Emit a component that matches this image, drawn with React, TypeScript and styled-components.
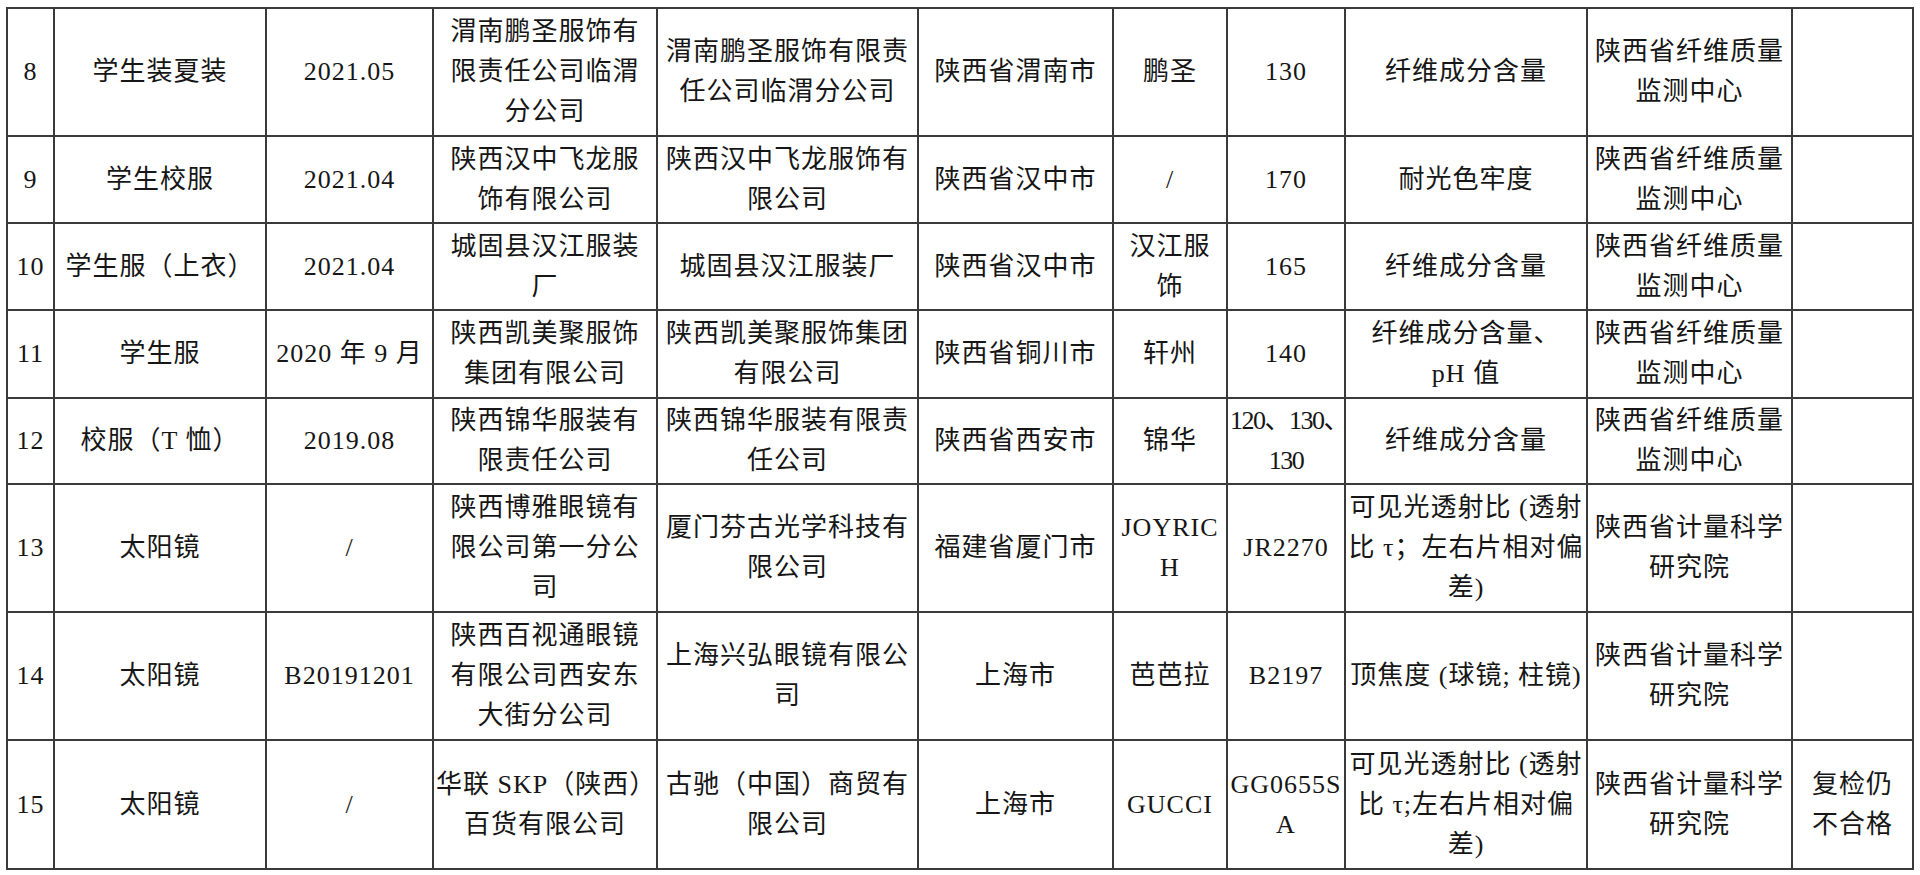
import React from 'react'
import styled, { createGlobalStyle } from 'styled-components'

const GlobalStyle = createGlobalStyle`
  html, body {
    margin: 0;
    padding: 0;
    background: #fff;
  }
`

const Page = styled.div`
  padding: 7px 0 0 6px;
  width: 1920px;
  height: 875px;
  box-sizing: border-box;
  overflow: hidden;
`

const Table = styled.table`
  border-collapse: collapse;
  table-layout: fixed;
  width: 1906px;
  font-family: "Liberation Serif", "Noto Sans CJK SC", serif;
  font-size: 26px;
  color: #161616;
`

const Row = styled.tr<{ $h: number }>`
  height: ${(p) => p.$h}px;
`

const Cell = styled.td<{ $tight?: boolean }>`
  border: 2px solid #3a3a3a;
  padding: 0 2px;
  text-align: center;
  vertical-align: middle;
  white-space: pre;
  line-height: 40px;
  letter-spacing: ${(p) => (p.$tight ? '-1.5px' : '1px')};
`

const colWidths = [47, 212, 167, 224, 261, 195, 114, 118, 242, 205, 121]

// a cell that starts with "~" is set tighter (text that fills the whole column)
type RowData = { h: number; cells: string[] }

const rows: RowData[] = [
  {
    h: 128,
    cells: [
      '8',
      '学生装夏装',
      '2021.05',
      '渭南鹏圣服饰有\n限责任公司临渭\n分公司',
      '渭南鹏圣服饰有限责\n任公司临渭分公司',
      '陕西省渭南市',
      '鹏圣',
      '130',
      '纤维成分含量',
      '陕西省纤维质量\n监测中心',
      '',
    ],
  },
  {
    h: 87,
    cells: [
      '9',
      '学生校服',
      '2021.04',
      '陕西汉中飞龙服\n饰有限公司',
      '陕西汉中飞龙服饰有\n限公司',
      '陕西省汉中市',
      '/',
      '170',
      '耐光色牢度',
      '陕西省纤维质量\n监测中心',
      '',
    ],
  },
  {
    h: 87,
    cells: [
      '10',
      '学生服（上衣）',
      '2021.04',
      '城固县汉江服装\n厂',
      '城固县汉江服装厂',
      '陕西省汉中市',
      '汉江服\n饰',
      '165',
      '纤维成分含量',
      '陕西省纤维质量\n监测中心',
      '',
    ],
  },
  {
    h: 88,
    cells: [
      '11',
      '学生服',
      '2020 年 9 月',
      '陕西凯美聚服饰\n集团有限公司',
      '陕西凯美聚服饰集团\n有限公司',
      '陕西省铜川市',
      '轩州',
      '140',
      '纤维成分含量、\npH 值',
      '陕西省纤维质量\n监测中心',
      '',
    ],
  },
  {
    h: 86,
    cells: [
      '12',
      '校服（T 恤）',
      '2019.08',
      '陕西锦华服装有\n限责任公司',
      '陕西锦华服装有限责\n任公司',
      '陕西省西安市',
      '锦华',
      '~120、130、\n130',
      '纤维成分含量',
      '陕西省纤维质量\n监测中心',
      '',
    ],
  },
  {
    h: 128,
    cells: [
      '13',
      '太阳镜',
      '/',
      '陕西博雅眼镜有\n限公司第一分公\n司',
      '厦门芬古光学科技有\n限公司',
      '福建省厦门市',
      'JOYRIC\nH',
      'JR2270',
      '可见光透射比 (透射\n比 τ；左右片相对偏\n差)',
      '陕西省计量科学\n研究院',
      '',
    ],
  },
  {
    h: 128,
    cells: [
      '14',
      '太阳镜',
      'B20191201',
      '陕西百视通眼镜\n有限公司西安东\n大街分公司',
      '上海兴弘眼镜有限公\n司',
      '上海市',
      '芭芭拉',
      'B2197',
      '顶焦度 (球镜; 柱镜)',
      '陕西省计量科学\n研究院',
      '',
    ],
  },
  {
    h: 129,
    cells: [
      '15',
      '太阳镜',
      '/',
      '华联 SKP（陕西）\n百货有限公司',
      '古驰（中国）商贸有\n限公司',
      '上海市',
      'GUCCI',
      'GG0655S\nA',
      '可见光透射比 (透射\n比 τ;左右片相对偏\n差)',
      '陕西省计量科学\n研究院',
      '复检仍\n不合格',
    ],
  },
]

export default function App() {
  return (
    <Page>
      <GlobalStyle />
      <Table>
        <colgroup>
          {colWidths.map((w, i) => (
            <col key={i} style={{ width: w }} />
          ))}
        </colgroup>
        <tbody>
          {rows.map((r, i) => (
            <Row key={i} $h={r.h}>
              {r.cells.map((c, j) => {
                const tight = c.startsWith('~')
                return (
                  <Cell key={j} $tight={tight}>
                    {tight ? c.slice(1) : c}
                  </Cell>
                )
              })}
            </Row>
          ))}
        </tbody>
      </Table>
    </Page>
  )
}
